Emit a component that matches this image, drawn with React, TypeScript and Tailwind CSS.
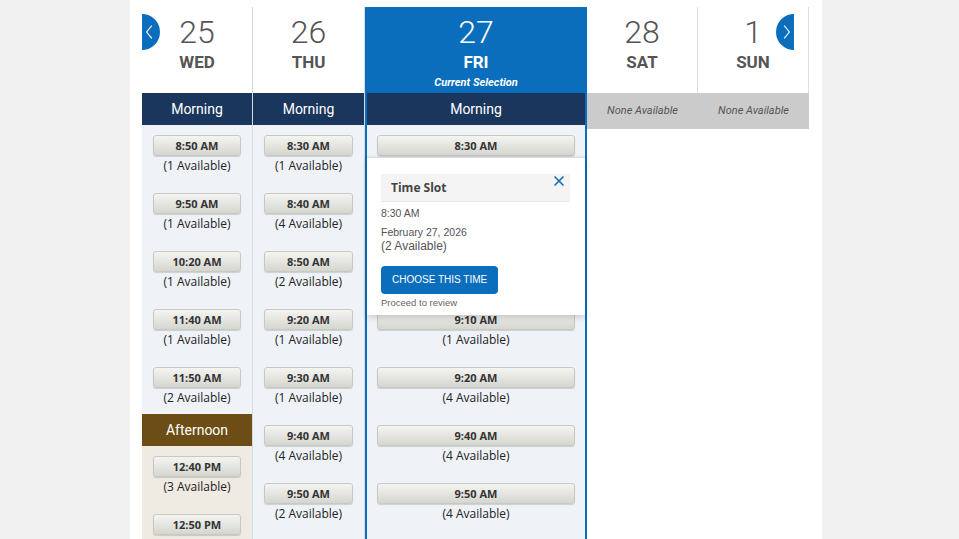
import { X } from 'lucide-react'

type Slot = { time: string; count: number; underPopup?: 'all' | 'count' }
type Period = { name: 'Morning' | 'Afternoon'; slots: Slot[] }
type Day = { num: string; dow: string; periods: Period[]; selected?: boolean }

const days: Day[] = [
  {
    num: '25',
    dow: 'WED',
    periods: [
      {
        name: 'Morning',
        slots: [
          { time: '8:50 AM', count: 1 },
          { time: '9:50 AM', count: 1 },
          { time: '10:20 AM', count: 1 },
          { time: '11:40 AM', count: 1 },
          { time: '11:50 AM', count: 2 },
        ],
      },
      {
        name: 'Afternoon',
        slots: [
          { time: '12:40 PM', count: 3 },
          { time: '12:50 PM', count: 1 },
        ],
      },
    ],
  },
  {
    num: '26',
    dow: 'THU',
    periods: [
      {
        name: 'Morning',
        slots: [
          { time: '8:30 AM', count: 1 },
          { time: '8:40 AM', count: 4 },
          { time: '8:50 AM', count: 2 },
          { time: '9:20 AM', count: 1 },
          { time: '9:30 AM', count: 1 },
          { time: '9:40 AM', count: 4 },
          { time: '9:50 AM', count: 2 },
        ],
      },
    ],
  },
  {
    num: '27',
    dow: 'FRI',
    selected: true,
    periods: [
      {
        name: 'Morning',
        slots: [
          // the open popover sits on top of these
          { time: '8:30 AM', count: 2, underPopup: 'count' },
          { time: '8:40 AM', count: 2, underPopup: 'all' },
          { time: '9:00 AM', count: 1, underPopup: 'all' },
          { time: '9:10 AM', count: 1 },
          { time: '9:20 AM', count: 4 },
          { time: '9:40 AM', count: 4 },
          { time: '9:50 AM', count: 4 },
        ],
      },
    ],
  },
  { num: '28', dow: 'SAT', periods: [] },
  { num: '1', dow: 'SUN', periods: [] },
]

const roboto = { fontFamily: 'Roboto, "Liberation Sans", sans-serif' }
const openSans = { fontFamily: '"Open Sans", "Liberation Sans", sans-serif' }
const arial = { fontFamily: '"Liberation Sans", Arial, sans-serif' }

function SlotButton({ slot }: { slot: Slot }) {
  return (
    <div className={`flex flex-col items-center ${slot.underPopup === 'all' ? 'invisible' : ''}`} style={openSans}>
      <button className="w-full h-[21px] rounded-[3px] border border-[#c9c9c4] bg-gradient-to-b from-[#f4f4f2] to-[#d6d6d0] shadow-[0_1px_1px_rgba(0,0,0,0.15)] text-[11px] font-bold text-[#333] leading-none">
        {slot.time}
      </button>
      <span className={`mt-[2px] text-[12px] leading-[16px] text-[#222] ${slot.underPopup === 'count' ? 'invisible' : ''}`}>
        ({slot.count} Available)
      </span>
    </div>
  )
}

function PeriodBlock({ period, wide, last }: { period: Period; wide: boolean; last: boolean }) {
  const morning = period.name === 'Morning'
  return (
    <div className={`flex flex-col ${last ? 'flex-1' : ''}`}>
      <div
        className={`h-[32px] flex items-center justify-center text-[14px] text-white ${morning ? 'bg-[#1b365d]' : 'bg-[#6c4d16]'}`}
        style={roboto}
      >
        {period.name}
      </div>
      <div
        className={`flex-1 flex flex-col gap-[19px] pt-[10px] pb-[8px] ${wide ? 'px-[10px]' : 'px-[11px]'} ${morning ? 'bg-[#eff3f8]' : 'bg-[#efebe3]'}`}
      >
        {period.slots.map(s => (
          <SlotButton key={s.time} slot={s} />
        ))}
      </div>
    </div>
  )
}

function TimePopup() {
  return (
    <div
      className="absolute left-0 right-0 top-[64px] h-[158px] bg-white border-t border-[#dcdcdc] shadow-[0_2px_6px_rgba(0,0,0,0.18)] px-[14px] pt-[16px]"
      style={arial}
    >
      <div className="relative h-[28px] mr-px bg-[#f4f4f4] flex items-center pl-[10px] border-b border-[#e8e8e8]">
        <span className="text-[12px] font-bold text-[#444]" style={openSans}>
          Time Slot
        </span>
        <X className="absolute right-[3px] top-[-1px] w-[16px] h-[16px] text-[#1a6fb8]" strokeWidth={2.6} />
      </div>
      <div className="mt-[4px] text-[10.5px] leading-[14px] text-[#555]">8:30 AM</div>
      <div className="mt-[5px] text-[10.5px] leading-[14px] text-[#555]">February 27, 2026</div>
      <div className="text-[12px] leading-[14px] text-[#555]">(2 Available)</div>
      <button className="mt-[13px] h-[28px] px-[11px] rounded-[4px] bg-[#0a6ebd] text-white text-[10px] leading-none">
        CHOOSE THIS TIME
      </button>
      <div className="mt-[2px] text-[9.5px] leading-[13px] text-[#666]">Proceed to review</div>
    </div>
  )
}

function DayColumn({ day }: { day: Day }) {
  if (day.selected) {
    return (
      <div className="flex flex-col border-x-2 border-[#0a6ebd]">
        <div className="h-[86px] bg-[#0a6ebd] flex flex-col items-center text-white pt-[7px]" style={roboto}>
          <span className="text-[32px] font-light leading-[36px]">{day.num}</span>
          <span className="mt-[2px] text-[17px] font-bold leading-[20px]">{day.dow}</span>
          <span className="mt-[4px] text-[11px] font-bold italic leading-[14px]">Current Selection</span>
        </div>
        <div className="relative flex-1 flex flex-col">
          {day.periods.map((p, i) => (
            <PeriodBlock key={p.name} period={p} wide last={i === day.periods.length - 1} />
          ))}
          <TimePopup />
        </div>
      </div>
    )
  }

  const empty = day.periods.length === 0
  return (
    <div className={`flex flex-col ${empty ? '' : 'border-r border-[#d5dbe3]'}`}>
      <div
        className={`h-[86px] flex flex-col items-center text-[#555] pt-[7px] ${empty ? 'border-r border-[#dddddd]' : ''}`}
        style={roboto}
      >
        <span className="text-[32px] font-light leading-[36px]">{day.num}</span>
        <span className="mt-[2px] text-[17px] font-bold leading-[20px]">{day.dow}</span>
      </div>
      {empty ? (
        <div className="h-[36px] bg-[#cbcbcb] flex items-center justify-center pt-[1px] text-[11px] italic text-[#555]" style={roboto}>
          None Available
        </div>
      ) : (
        day.periods.map((p, i) => (
          <PeriodBlock key={p.name} period={p} wide={false} last={i === day.periods.length - 1} />
        ))
      )}
    </div>
  )
}

export default function App() {
  return (
    <div className="h-[539px] overflow-hidden bg-[#f1f1f1]">
      <div className="ml-[130px] w-[692px] h-full bg-white px-3 pt-[7px]">
        <div className="relative h-full grid grid-cols-[111px_112px_222px_111px_111px]">
          {days.map(d => (
            <DayColumn key={d.num} day={d} />
          ))}

          {/* prev / next week arrows */}
          <button className="absolute left-0 top-[7px] w-[18px] h-[36px] rounded-r-full bg-[#0a6ebd] flex items-center justify-start pl-[3px]">
            <svg viewBox="0 0 10 18" className="w-[8px] h-[16px]" fill="none" stroke="white" strokeWidth="1.4">
              <path d="M8.5 1 L2 9 L8.5 17" />
            </svg>
          </button>
          <button className="absolute left-[634px] top-[7px] w-[18px] h-[36px] rounded-l-full bg-[#0a6ebd] flex items-center justify-end pr-[3px]">
            <svg viewBox="0 0 10 18" className="w-[8px] h-[16px]" fill="none" stroke="white" strokeWidth="1.4">
              <path d="M1.5 1 L8 9 L1.5 17" />
            </svg>
          </button>
        </div>
      </div>
    </div>
  )
}
